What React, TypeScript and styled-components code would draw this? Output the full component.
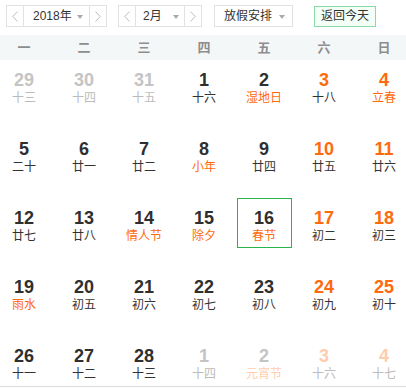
import React from "react";
import styled, { createGlobalStyle } from "styled-components";

const Global = createGlobalStyle`
  html, body { margin: 0; padding: 0; background: #fff; }
  body { font-family: "Liberation Sans", "Noto Sans CJK SC", sans-serif; overflow: hidden; }
`;

const Page = styled.div`
  width: 406px;
  height: 388px;
  overflow: hidden;
  background: #fff;
`;

const Toolbar = styled.div`
  display: flex;
  align-items: center;
  height: 35px;
  padding: 0 6px;
  box-sizing: border-box;
  padding-bottom: 3px;
`;

const Picker = styled.div<{ $w: number; $mr: number }>`
  display: flex;
  width: ${(p) => p.$w}px;
  height: 22px;
  box-sizing: border-box;
  border: 1px solid #e2e2e2;
  margin-right: ${(p) => p.$mr}px;
  background: #fff;
`;

const ArrowCell = styled.div<{ $side: "l" | "r" }>`
  width: 16px;
  flex: none;
  display: flex;
  align-items: center;
  justify-content: center;
  ${(p) => (p.$side === "l" ? "border-right: 1px solid #e2e2e2;" : "border-left: 1px solid #e2e2e2;")}
`;

const SelectBody = styled.div<{ $pl: number; $pr: number }>`
  flex: 1;
  display: flex;
  align-items: center;
  justify-content: space-between;
  padding-left: ${(p) => p.$pl}px;
  padding-right: ${(p) => p.$pr}px;
  font-size: 12px;
  color: #333;
  line-height: 20px;
`;

const Caret = styled.span`
  width: 0;
  height: 0;
  border-left: 3px solid transparent;
  border-right: 3px solid transparent;
  border-top: 4px solid #aaa;
  margin-top: 1px;
`;

const TodayButton = styled.div`
  height: 21px;
  box-sizing: border-box;
  border: 1px solid #86dca4;
  background: #f4fff7;
  color: #333;
  font-size: 12px;
  line-height: 19px;
  padding: 0 6px;
  width: 62px;
  text-align: center;
`;

const WeekBar = styled.div`
  display: grid;
  grid-template-columns: repeat(7, 60px);
  margin-left: -6px;
  height: 25px;
  align-items: center;
  background: #f4f7f8;
  box-shadow: 6px 0 0 #f4f7f8, -6px 0 0 #f4f7f8;
`;

const WeekLabel = styled.div`
  text-align: center;
  font-size: 13px;
  font-weight: bold;
  color: #8d8d8d;
  line-height: 25px;
`;

const Grid = styled.div`
  display: grid;
  grid-template-columns: repeat(7, 60px);
  grid-auto-rows: 50px;
  row-gap: 19px;
  margin-left: -6px;
  padding-bottom: 0;
  justify-items: center;
`;

const Divider = styled.div`
  height: 1px;
  background: #dcdcdc;
`;

const Cell = styled.div<{ $selected?: boolean }>`
  width: 55px;
  height: 50px;
  box-sizing: border-box;
  border: 1px solid ${(p) => (p.$selected ? "#27b54b" : "transparent")};
  padding-top: 9px;
  text-align: center;
`;

const Num = styled.div<{ $c: string }>`
  font-family: "Liberation Sans", sans-serif;
  font-weight: bold;
  font-size: 18px;
  line-height: 20px;
  color: ${(p) => p.$c};
`;

const Lunar = styled.div<{ $c: string }>`
  font-size: 12px;
  line-height: 16px;
  color: ${(p) => p.$c};
`;

const Chevron = ({ dir }: { dir: "l" | "r" }) => (
  <svg width="6" height="11" viewBox="0 0 6 11">
    <polyline
      points={dir === "l" ? "5.5,0.5 0.8,5.5 5.5,10.5" : "0.5,0.5 5.2,5.5 0.5,10.5"}
      fill="none"
      stroke="#bdbdbd"
      strokeWidth="1"
    />
  </svg>
);

type Kind = "in" | "out";
type Day = { n: number; l: string; kind: Kind; wk?: boolean; fest?: boolean; sel?: boolean };

const D = (n: number, l: string, kind: Kind = "in", fest = false, sel = false): Day => ({ n, l, kind, fest, sel });

const rows: Day[][] = [
  [D(29, "十三", "out"), D(30, "十四", "out"), D(31, "十五", "out"), D(1, "十六"), D(2, "湿地日", "in", true), D(3, "十八"), D(4, "立春", "in", true)],
  [D(5, "二十"), D(6, "廿一"), D(7, "廿二"), D(8, "小年", "in", true), D(9, "廿四"), D(10, "廿五"), D(11, "廿六")],
  [D(12, "廿七"), D(13, "廿八"), D(14, "情人节", "in", true), D(15, "除夕", "in", true), D(16, "春节", "in", true, true), D(17, "初二"), D(18, "初三")],
  [D(19, "雨水", "in", true), D(20, "初五"), D(21, "初六"), D(22, "初七"), D(23, "初八"), D(24, "初九"), D(25, "初十")],
  [D(26, "十一"), D(27, "十二"), D(28, "十三"), D(1, "十四", "out"), D(2, "元宵节", "out", true), D(3, "十六", "out"), D(4, "十七", "out")],
];

const weekdays = ["一", "二", "三", "四", "五", "六", "日"];

const ORANGE = "#ff6a0c";
const DARK = "#2f2f2f";
const GRAY = "#c4c4c4";
const FADED = "#ffcdae";

function numColor(d: Day, col: number) {
  const weekend = col >= 5;
  if (d.kind === "out") return weekend ? FADED : GRAY;
  return weekend ? ORANGE : DARK;
}
function lunarColor(d: Day) {
  if (d.kind === "out") return d.fest ? FADED : "#bcbcbc";
  return d.fest ? ORANGE : "#333";
}

export default function App() {
  return (
    <Page>
      <Global />
      <Toolbar>
        <Picker $w={101} $mr={11}>
          <ArrowCell $side="l"><Chevron dir="l" /></ArrowCell>
          <SelectBody $pl={9} $pr={6}>
            <span>2018年</span>
            <Caret />
          </SelectBody>
          <ArrowCell $side="r"><Chevron dir="r" /></ArrowCell>
        </Picker>
        <Picker $w={84} $mr={12}>
          <ArrowCell $side="l"><Chevron dir="l" /></ArrowCell>
          <SelectBody $pl={7} $pr={5}>
            <span>2月</span>
            <Caret />
          </SelectBody>
          <ArrowCell $side="r"><Chevron dir="r" /></ArrowCell>
        </Picker>
        <Picker $w={79} $mr={21}>
          <SelectBody $pl={9} $pr={7}>
            <span>放假安排</span>
            <Caret />
          </SelectBody>
        </Picker>
        <TodayButton>返回今天</TodayButton>
      </Toolbar>
      <WeekBar>
        {weekdays.map((w) => (
          <WeekLabel key={w}>{w}</WeekLabel>
        ))}
      </WeekBar>
      <Grid>
        {rows.map((r, ri) =>
          r.map((d, ci) => (
            <Cell key={`${ri}-${ci}`} $selected={d.sel}>
              <Num $c={numColor(d, ci)}>{d.n}</Num>
              <Lunar $c={lunarColor(d)}>{d.l}</Lunar>
            </Cell>
          ))
        )}
      </Grid>
      <Divider />
    </Page>
  );
}
